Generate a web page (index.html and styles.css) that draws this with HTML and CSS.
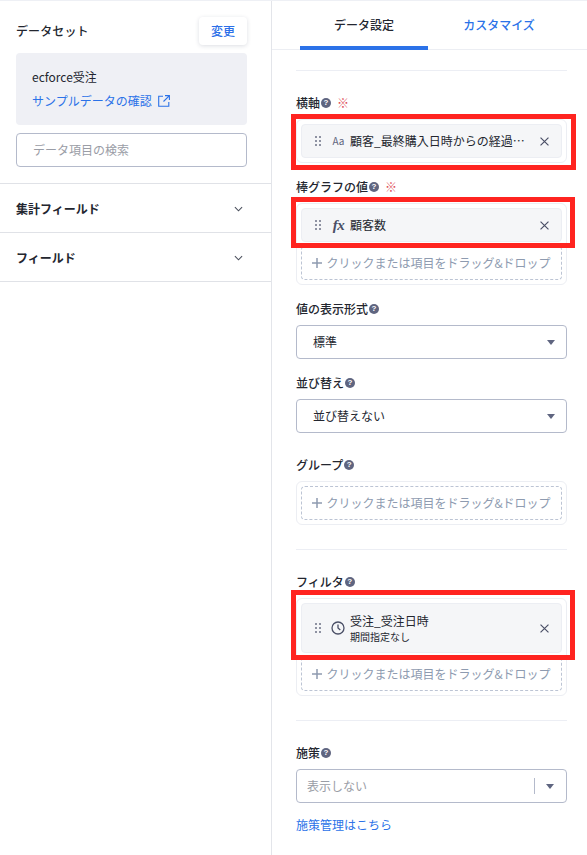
FILE: index.html
```html
<!DOCTYPE html>
<html lang="ja">
<head>
<meta charset="utf-8">
<title>データ設定</title>
<link rel="stylesheet" href="styles.css">
</head>
<body>
<div class="app">
  <aside class="side">
    <section class="dataset">
      <div class="dataset-head">
        <span class="dataset-title">データセット</span>
        <button class="change-btn">変更</button>
      </div>
      <div class="dataset-box">
        <div class="dataset-name">ecforce受注</div>
        <a class="link sample-link">サンプルデータの確認
          <svg class="ext-icon" viewBox="0 0 12 12"><path d="M5 1.200H.7v10.100h10.100V7M7 .6h4.400V5M11.200.8 5.500 6.500" fill="none" stroke="currentColor" stroke-width="1.100"/></svg>
        </a>
      </div>
      <div class="search">データ項目の検索</div>
    </section>
    <div class="acc-row"><span>集計フィールド</span><svg class="chev" viewBox="0 0 10 6"><path d="M1 1l4 4 4-4" fill="none" stroke="currentColor" stroke-width="1.200"/></svg></div>
    <div class="acc-row"><span>フィールド</span><svg class="chev" viewBox="0 0 10 6"><path d="M1 1l4 4 4-4" fill="none" stroke="currentColor" stroke-width="1.200"/></svg></div>
  </aside>

  <main class="panel">
    <nav class="tabs">
      <div class="tab active">データ設定</div>
      <div class="tab second">カスタマイズ</div>
    </nav>
    <div class="panel-body">
      <hr class="rule first">

      <div class="label">横軸<i class="help">?</i><b class="req">※</b></div>
      <div class="drop">
        <span class="mark mark-a"></span>
        <div class="chip">
          <svg class="dots" viewBox="0 0 6 10"><g fill="currentColor"><circle cx="1" cy="1" r="1"/><circle cx="5" cy="1" r="1"/><circle cx="1" cy="5" r="1"/><circle cx="5" cy="5" r="1"/><circle cx="1" cy="9" r="1"/><circle cx="5" cy="9" r="1"/></g></svg>
          <span class="type type-aa">Aa</span>
          <span class="chip-text">顧客_最終購入日時からの経過日数グループ</span>
          <svg class="close" viewBox="0 0 10 10"><path d="M.6.6l8.800 8.800M9.400.6.6 9.400" fill="none" stroke="currentColor" stroke-width="1.300"/></svg>
        </div>
      </div>

      <div class="label gap16">棒グラフの値<i class="help">?</i><b class="req">※</b></div>
      <div class="drop">
        <span class="mark mark-b"></span>
        <div class="chip">
          <svg class="dots" viewBox="0 0 6 10"><g fill="currentColor"><circle cx="1" cy="1" r="1"/><circle cx="5" cy="1" r="1"/><circle cx="1" cy="5" r="1"/><circle cx="5" cy="5" r="1"/><circle cx="1" cy="9" r="1"/><circle cx="5" cy="9" r="1"/></g></svg>
          <span class="type type-fx">fx</span>
          <span class="chip-text">顧客数</span>
          <svg class="close" viewBox="0 0 10 10"><path d="M.6.6l8.800 8.800M9.400.6.6 9.400" fill="none" stroke="currentColor" stroke-width="1.300"/></svg>
        </div>
        <div class="dashed"><svg class="plus" viewBox="0 0 10 10"><path d="M5 0v10M0 5h10" stroke="currentColor" stroke-width="1.500"/></svg>クリックまたは項目をドラッグ&amp;ドロップ</div>
      </div>

      <div class="label gap16">値の表示形式<i class="help">?</i></div>
      <div class="select"><span>標準</span><i class="caret"></i></div>

      <div class="label gap16">並び替え<i class="help">?</i></div>
      <div class="select"><span>並び替えない</span><i class="caret"></i></div>

      <div class="label gap24">グループ<i class="help">?</i></div>
      <div class="drop">
        <div class="dashed"><svg class="plus" viewBox="0 0 10 10"><path d="M5 0v10M0 5h10" stroke="currentColor" stroke-width="1.500"/></svg>クリックまたは項目をドラッグ&amp;ドロップ</div>
      </div>

      <hr class="rule">

      <div class="label">フィルタ<i class="help">?</i></div>
      <div class="drop">
        <span class="mark mark-c"></span>
        <div class="chip tall">
          <svg class="dots" viewBox="0 0 6 10"><g fill="currentColor"><circle cx="1" cy="1" r="1"/><circle cx="5" cy="1" r="1"/><circle cx="1" cy="5" r="1"/><circle cx="5" cy="5" r="1"/><circle cx="1" cy="9" r="1"/><circle cx="5" cy="9" r="1"/></g></svg>
          <svg class="clock" viewBox="0 0 14 14"><circle cx="7" cy="7" r="6" fill="none" stroke="currentColor" stroke-width="1.300"/><path d="M7 3.500V7l2.300 2" fill="none" stroke="currentColor" stroke-width="1.300"/></svg>
          <span class="chip-stack">
            <span class="chip-text">受注_受注日時</span>
            <span class="chip-sub">期間指定なし</span>
          </span>
          <svg class="close" viewBox="0 0 10 10"><path d="M.6.6l8.800 8.800M9.400.6.6 9.400" fill="none" stroke="currentColor" stroke-width="1.300"/></svg>
        </div>
        <div class="dashed"><svg class="plus" viewBox="0 0 10 10"><path d="M5 0v10M0 5h10" stroke="currentColor" stroke-width="1.500"/></svg>クリックまたは項目をドラッグ&amp;ドロップ</div>
      </div>

      <hr class="rule">

      <div class="label">施策<i class="help">?</i></div>
      <div class="select placeholder"><span>表示しない</span><i class="sep"></i><i class="caret"></i></div>
      <a class="link manage">施策管理はこちら</a>
    </div>
  </main>
</div>
</body>
</html>
```

FILE: styles.css
```css
* { box-sizing: border-box; }
html, body { margin: 0; padding: 0; }
body {
  width: 587px;
  height: 855px;
  overflow: hidden;
  background: #fff;
  color: #23262f;
  font-family: "Noto Sans CJK JP", "Noto Sans", sans-serif;
  font-size: 12px;
  line-height: 16px;
}
.app {
  display: flex;
  height: 855px;
  border-top: 1px solid #eef0f5;
}

/* left column */
.side {
  width: 272px;
  flex: none;
  border-right: 1px solid #e3e5ea;
}
.dataset {
  padding: 16px 24px 16px 16px;
  border-bottom: 1px solid #e0e2e7;
}
.dataset-head {
  display: flex;
  justify-content: space-between;
  align-items: center;
  height: 28px;
}
.dataset-title { font-weight: 500; letter-spacing: .1px; }
.change-btn {
  width: 48px;
  height: 28px;
  border: 0;
  border-radius: 4px;
  background: #fff;
  box-shadow: 0 1px 4px rgba(40, 50, 80, .16);
  color: #2b6fe8;
  font: 500 12px/16px "Noto Sans CJK JP", sans-serif;
  padding: 0;
}
.dataset-box {
  margin-top: 8px;
  height: 72px;
  padding: 16px 16px 0;
  background: #eff0f5;
  border-radius: 4px;
}
.dataset-name { font-weight: 400; }
.link { color: #2b72e8; }
.sample-link {
  display: flex;
  align-items: center;
  gap: 6px;
  margin-top: 8px;
}
.ext-icon { width: 12px; height: 12px; flex: none; }
.search {
  margin-top: 8px;
  height: 34px;
  padding: 8px 16px;
  border: 1px solid #b4bacb;
  border-radius: 4px;
  color: #9a9da6;
}
.acc-row {
  display: flex;
  justify-content: space-between;
  align-items: center;
  height: 49px;
  padding: 1px 28px 0 16px;
  border-bottom: 1px solid #e0e2e7;
  font-weight: 700;
}
.chev { width: 9px; height: 6px; color: #4a4f5c; }

/* right column */
.panel { flex: 1; min-width: 0; }
.tabs {
  display: flex;
  height: 49px;
  padding-left: 28px;
  border-bottom: 1px solid #eceef3;
}
.tab {
  width: 128px;
  height: 49px;
  padding-top: 16px;
  text-align: center;
  font-weight: 500;
  color: #2b72e8;
}
.tab.second { width: 142px; }
.tab.active {
  color: #23262f;
  border-bottom: 4px solid #2b72e8;
}
.panel-body { padding: 0 20px 0 24px; }
.rule {
  margin: 24px 0;
  height: 1px;
  border: 0;
  background: #eceef4;
}
.rule.first { margin-top: 20px; }
.label {
  display: flex;
  align-items: center;
  height: 16px;
  margin-bottom: 8px;
  font-weight: 500;
}
.gap16 { margin-top: 16px; }
.gap24 { margin-top: 24px; }
.help {
  width: 10px;
  height: 10px;
  margin-left: 1px;
  border-radius: 50%;
  background: #5f6580;
  color: #fff;
  font: 700 8px/10px "Liberation Sans", sans-serif;
  text-align: center;
}
.req {
  margin-left: 6px;
  color: #e0505a;
  font-weight: 400;
}

/* drop zones and chips */
.drop {
  position: relative;
  display: flex;
  flex-direction: column;
  gap: 4px;
  padding: 4px;
  border: 1px solid #eceef3;
  border-radius: 6px;
}
.mark {
  position: absolute;
  z-index: 2;
  border: 5px solid #ff2420;
  pointer-events: none;
}
.mark-a { left: -6px; top: -6px; width: 285px; height: 56px; }
.mark-b { left: -6px; top: -7px; width: 284px; height: 51px; }
.mark-c { left: -6px; top: -9px; width: 284px; height: 70px; }
.chip {
  display: flex;
  align-items: center;
  height: 34px;
  padding: 0 12px 0 13px;
  background: #f5f6f8;
  border: 1px solid #eceef3;
  border-radius: 4px;
}
.chip.tall { height: 50px; }
.dots { width: 6px; height: 10px; flex: none; color: #6b7186; }
.type {
  width: 13px;
  margin: 0 5px 0 11px;
  flex: none;
  color: #5f6580;
  text-align: center;
}
.type-aa { font-size: 10px; }
.type-fx {
  font: italic 700 15px/16px "Liberation Serif", serif;
  letter-spacing: -.5px;
  color: #4a4f66;
}
.clock {
  width: 14px;
  height: 14px;
  margin: 0 5px 0 10px;
  flex: none;
  color: #4a4f66;
}
.chip-text {
  flex: 1;
  min-width: 0;
  overflow: hidden;
  white-space: nowrap;
  text-overflow: ellipsis;
}
.chip-stack { flex: 1; display: flex; flex-direction: column; min-width: 0; }
.chip-stack .chip-text { flex: none; }
.chip-sub { margin-top: 2px; font-size: 10px; line-height: 12px; }
.close { width: 9px; height: 9px; margin-left: 12px; flex: none; color: #4a4f66; }
.dashed {
  display: flex;
  align-items: center;
  justify-content: center;
  height: 34px;
  border: 1px dashed #bcc4d4;
  border-radius: 4px;
  color: #8e9bb0;
  white-space: nowrap;
}
.plus {
  width: 10px;
  height: 10px;
  margin-right: 4px;
  flex: none;
}

/* selects */
.select {
  display: flex;
  align-items: center;
  height: 34px;
  padding: 0 11px 0 16px;
  border: 1px solid #b4bacb;
  border-radius: 4px;
}
.select span { flex: 1; }
.caret {
  width: 0;
  height: 0;
  border-left: 4.5px solid transparent;
  border-right: 4.5px solid transparent;
  border-top: 5px solid #5f6580;
}
.placeholder { padding-left: 10px; padding-right: 12px; color: #9a9da6; }
.sep {
  width: 1px;
  height: 16px;
  margin-right: 11px;
  background: #b4bacb;
}
.manage { display: block; margin-top: 14px; }
```
